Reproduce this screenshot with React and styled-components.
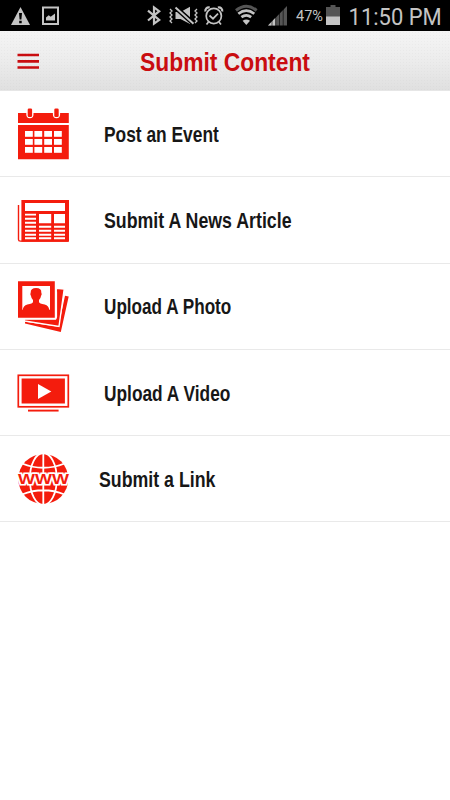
import React from 'react';
import styled, { createGlobalStyle } from 'styled-components';

const RED = '#f41c0d';
const GREY = '#c4c4c4';
const DIM = '#555';

const Global = createGlobalStyle`
  *, *::before, *::after { box-sizing: border-box; }
  body { margin: 0; background: #fff; }
`;

const Screen = styled.main`
  display: flex;
  flex-direction: column;
  width: 450px;
  height: 800px;
  overflow: hidden;
  background: #fff;
  font-family: "Liberation Sans", Arial, sans-serif;
`;

const StatusBar = styled.div`
  display: flex;
  height: 31px;
  flex: none;
  background: #000;
  color: ${GREY};
  font-family: Roboto, sans-serif;
`;

const Glyph = styled.svg`
  display: block;
  flex: none;
`;

const Spacer = styled.div`
  flex: 1;
`;

const Percent = styled.span`
  flex: none;
  width: 30px;
  font-size: 14.5px;
  line-height: 33px;
  white-space: nowrap;
`;

const Clock = styled.time`
  flex: none;
  width: 108px;
  padding-left: 7px;
  font-size: 23.5px;
  font-weight: 400;
  line-height: 34px;
  white-space: nowrap;
  transform: scaleX(0.935);
  transform-origin: left;
`;

const Header = styled.header`
  display: grid;
  grid-template-columns: 56px 338px 56px;
  grid-template-rows: 59px;
  height: 60px;
  flex: none;
  border-bottom: 1px solid #e6e6e6;
  background:
    radial-gradient(circle, rgba(0, 0, 0, 0.025) 0.6px, transparent 1px) 0 0 / 3px 3px,
    linear-gradient(#f5f5f5, #ececec 50%, #e0e0e0);
`;

const MenuButton = styled.button`
  display: block;
  border: 0;
  padding: 0;
  background: none;
`;

const Title = styled.h1`
  margin: 0;
  color: #c90d10;
  font-size: 26px;
  font-weight: 700;
  line-height: 62px;
  text-align: center;
  white-space: nowrap;
  transform: scaleX(0.878);
`;

const List = styled.ul`
  margin: 0;
  padding: 0;
  list-style: none;
`;

const Row = styled.li`
  display: flex;
  height: ${(p) => p.$height}px;
  border-bottom: 1px solid #e9e9e9;
`;

const Label = styled.span`
  margin-left: ${(p) => p.$indent}px;
  color: #171717;
  font-size: 21.3px;
  font-weight: 700;
  line-height: ${(p) => p.$leading || 88}px;
  white-space: nowrap;
  transform: scaleX(${(p) => p.$condense});
  transform-origin: left;
`;

const GlobeText = styled.text`
  fill: ${RED};
  stroke: #fff;
  stroke-width: 3px;
  paint-order: stroke;
  font-size: 14px;
  font-weight: 700;
`;

function WarningIcon() {
  return (
    <Glyph width="36" height="31" viewBox="0 0 36 31">
      <path d="M20.5 7 30 25H11Z" fill={GREY} />
      <path d="M19 13h3l-.6 6.5h-1.8zM19.2 20.7h2.5v2.5h-2.5z" fill="#000" />
    </Glyph>
  );
}

function PictureIcon() {
  return (
    <Glyph width="30" height="31" viewBox="36 0 30 31">
      <rect x="43" y="7.5" width="15" height="16.5" fill="none" stroke={GREY} strokeWidth="2" />
      <path d="M46 20.5v-3l2.7-2.3 2 1.6 4.3-3.4v7.1z" fill={GREY} />
    </Glyph>
  );
}

function BluetoothIcon() {
  return (
    <Glyph width="22" height="31" viewBox="144 0 22 31">
      <path d="m148 10.7 11.2 9.3-5.2 3.7V7.4l5.2 3.8-11.2 9.3" fill="none" stroke={GREY} strokeWidth="2.2" />
    </Glyph>
  );
}

function MuteIcon() {
  return (
    <Glyph width="36" height="31" viewBox="166 0 36 31">
      <path d="M175.5 12h5L190 6.7V24l-9.5-5h-5z" fill={GREY} />
      <path d="m175 7 19 17" stroke="#000" strokeWidth="5" />
      <path d="m175.5 7.5 18 16.2" stroke={GREY} strokeWidth="2" />
      <path d="m170 9 2 2-2 2 2 2-2 2 2 2-2 2 2 2M197 9l-2 2 2 2-2 2 2 2-2 2 2 2-2 2" fill="none" stroke={GREY} strokeWidth="1.3" />
    </Glyph>
  );
}

function AlarmIcon() {
  return (
    <Glyph width="30" height="31" viewBox="202 0 30 31">
      <g fill="none" stroke={GREY} strokeWidth="1.7">
        <circle cx="213.8" cy="16" r="7.6" />
        <path d="m209.5 15.5 3.5 3.2 5-5M208.5 22l-2 2.5M219 22l2 2.5" />
        <path d="M205.4 11.5c-.5-2.5 1.7-4.8 4.3-4M222.2 11.5c.5-2.5-1.7-4.8-4.3-4" strokeWidth="2.2" />
      </g>
    </Glyph>
  );
}

function WifiIcon() {
  return (
    <Glyph width="32" height="31" viewBox="232 0 32 31">
      <path d="M236 10.5q10.3-8.5 20.6 0" fill="none" stroke={DIM} strokeWidth="3" />
      <path d="M238.3 13.8q8-6.3 16 0M241.4 17.2q4.9-3.7 9.8 0" fill="none" stroke={GREY} strokeWidth="2.7" />
      <path d="m242.6 20.7 3.7 4.3 3.7-4.3q-3.7-2.6-7.4 0z" fill={GREY} />
    </Glyph>
  );
}

function SignalIcon() {
  return (
    <Glyph width="32" height="31" viewBox="264 0 32 31">
      <path d="M268 25.5 287 6v19.5z" fill={DIM} />
      <path d="m268 25.5 7.5-7.7v7.7z" fill={GREY} />
      <path d="M272 6v20M275.7 6v20M279.5 6v20M283.2 6v20" stroke="#000" strokeWidth=".6" />
    </Glyph>
  );
}

function BatteryIcon() {
  return (
    <Glyph width="16" height="31" viewBox="326 0 16 31">
      <path d="M326 7h4.5V5h5v2h4.5v10h-14z" fill={DIM} />
      <path d="M326 16.5h14V25h-14z" fill={GREY} />
    </Glyph>
  );
}

function CalendarIcon() {
  return (
    <Glyph width="90" height="85" viewBox="0 91 90 85">
      <path d="M18 113h8.3v1.5q0 3.7 3.6 3.7t3.6-3.7V113h19.4v1.5q0 3.7 3.6 3.7t3.6-3.7V113h8.7v10H18z" fill={RED} />
      <rect x="27.7" y="108.5" width="4.4" height="8.5" rx="1.3" fill={RED} />
      <rect x="54.3" y="108.5" width="4.4" height="8.5" rx="1.3" fill={RED} />
      <path d="M18 125h50.8v34.3H18z" fill={RED} />
      {[131, 139, 147].map((y) =>
        [25, 34.4, 44.2, 54].map((x) => <rect key={`${x}-${y}`} x={x} y={y} width="7.8" height="5.8" fill="#fff" />),
      )}
    </Glyph>
  );
}

function NewspaperIcon() {
  return (
    <Glyph width="90" height="86" viewBox="0 177 90 86">
      <path d="M18.5 205v34.5q0 1.6 1.8 1.6H68" fill="none" stroke={RED} strokeWidth="1.4" />
      <path d="M21.4 200H69v41.7H21.4z" fill={RED} />
      <path d="M25 203h40v8H25zM39 214h12.2v9.2H39zM54 214h11v9.2H54z" fill="#fff" />
      <path d="M25 214.6h11M25 218.7h11M25 222.7h11M25 226.8h11M25 230.8h11M25 234.8h11M25 238.2h11M39 226.8h12.2M39 230.8h12.2M39 234.8h12.2M39 238.2h12.2M54 226.8h11M54 230.8h11M54 234.8h11M54 238.2h11" stroke="#fff" strokeWidth="1.9" />
    </Glyph>
  );
}

function PhotosIcon() {
  return (
    <Glyph width="90" height="85" viewBox="0 264 90 85">
      <path d="m65 295.7 3.7.8-7.9 35.5L25 323.5v-1.7l33.5 5z" fill={RED} />
      <path d="m56.3 288.3 7.9.7-5.2 37.5-34.5-5.6V319H55.5z" fill={RED} stroke="#fff" strokeWidth="1.4" />
      <path d="M54 280h2.3v11.5h.8V317q0 2.2-2 2.2H20v-2h34z" fill="#fff" />
      <path d="M18 281.3h36.8v36.5H18z" fill={RED} />
      <path d="M22.3 286H50v23.7H22.3z" fill="#fff" />
      <path d="M22.8 310q.3-4.5 4.5-5.5 5.5-1 5.7-2.5v-2q-1.7-1.5-2-4-1.2-1.8-.3-3.4-.2-4.6 5.4-4.6t5.2 4.6q1 1.6-.3 3.4-.3 2.5-2 4v2q.2 1.5 5.7 2.5 4.2 1 4.5 5.5z" fill={RED} />
    </Glyph>
  );
}

function VideoIcon() {
  return (
    <Glyph width="90" height="85" viewBox="0 350 90 85">
      <rect x="18.3" y="375.3" width="50" height="31.5" fill="none" stroke={RED} strokeWidth="1.7" />
      <path d="M21.6 378.6h43.3v24.9H21.6z" fill={RED} />
      <path d="m38 384 13.3 7.5L38 399z" fill="#fff" />
      <path d="M28 410.6h30.6" stroke={RED} strokeWidth="1.9" />
    </Glyph>
  );
}

function GlobeIcon() {
  return (
    <Glyph width="90" height="85" viewBox="0 436 90 85">
      <circle cx="43.3" cy="479" r="25" fill={RED} />
      <g fill="none" stroke="#fff" strokeWidth="1.8">
        <path d="M43.3 453v52M22 463.5q21.3 8.5 42.6 0M22 494.5q21.3-8.5 42.6 0" />
        <ellipse cx="43.3" cy="479" rx="13.5" ry="26" />
      </g>
      <GlobeText x="18" y="484.2" textLength="51" lengthAdjust="spacingAndGlyphs">WWW</GlobeText>
    </Glyph>
  );
}

const actions = [
  { label: 'Post an Event', Icon: CalendarIcon, height: 86, indent: 14, condense: 0.815 },
  { label: 'Submit A News Article', Icon: NewspaperIcon, height: 87, indent: 14, condense: 0.834 },
  { label: 'Upload A Photo', Icon: PhotosIcon, height: 86, indent: 14, condense: 0.805, leading: 86 },
  { label: 'Upload A Video', Icon: VideoIcon, height: 86, indent: 14, condense: 0.813 },
  { label: 'Submit a Link', Icon: GlobeIcon, height: 86, indent: 9, condense: 0.834 },
];

export default function App() {
  return (
    <Screen>
      <Global />
      <StatusBar>
        <WarningIcon />
        <PictureIcon />
        <Spacer />
        <BluetoothIcon />
        <MuteIcon />
        <AlarmIcon />
        <WifiIcon />
        <SignalIcon />
        <Percent>47%</Percent>
        <BatteryIcon />
        <Clock>11:50 PM</Clock>
      </StatusBar>
      <Header>
        <MenuButton aria-label="Menu">
          <Glyph width="56" height="59" viewBox="0 31 56 59">
            <path d="M17.5 55H39M17.5 61.3H39M17.5 67.5H39" stroke="#c90d10" strokeWidth="2.7" />
          </Glyph>
        </MenuButton>
        <Title>Submit Content</Title>
      </Header>
      <List>
        {actions.map(({ label, Icon, height, indent, condense, leading }) => (
          <Row key={label} $height={height}>
            <Icon />
            <Label $indent={indent} $condense={condense} $leading={leading}>{label}</Label>
          </Row>
        ))}
      </List>
    </Screen>
  );
}
